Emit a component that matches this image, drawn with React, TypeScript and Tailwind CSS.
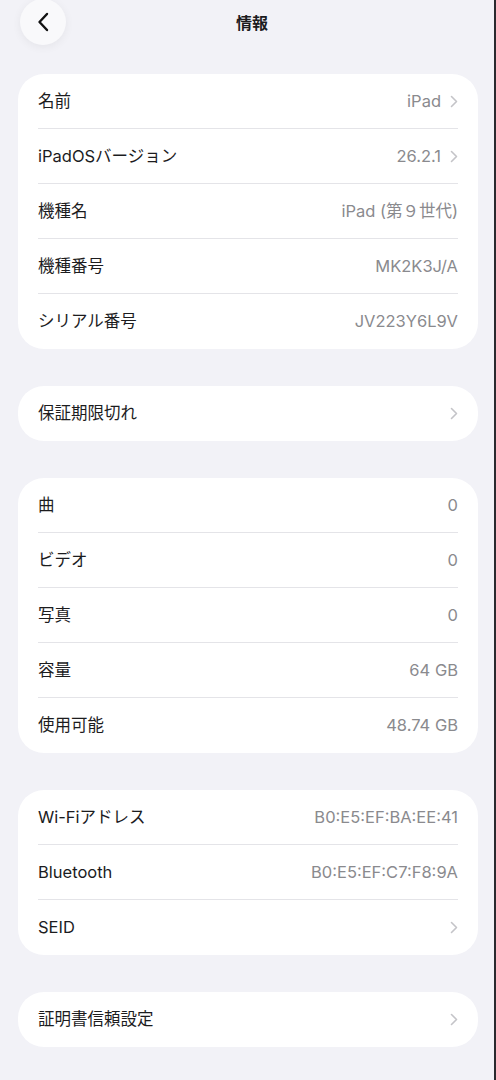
import React from "react";

interface Row {
  label: string;
  value?: string;
  chevron?: boolean;
}

const sections: Row[][] = [
  [
    { label: "名前", value: "iPad", chevron: true },
    { label: "iPadOSバージョン", value: "26.2.1", chevron: true },
    { label: "機種名", value: "iPad (第９世代)" },
    { label: "機種番号", value: "MK2K3J/A" },
    { label: "シリアル番号", value: "JV223Y6L9V" },
  ],
  [{ label: "保証期限切れ", chevron: true }],
  [
    { label: "曲", value: "0" },
    { label: "ビデオ", value: "0" },
    { label: "写真", value: "0" },
    { label: "容量", value: "64 GB" },
    { label: "使用可能", value: "48.74 GB" },
  ],
  [
    { label: "Wi-Fiアドレス", value: "B0:E5:EF:BA:EE:41" },
    { label: "Bluetooth", value: "B0:E5:EF:C7:F8:9A" },
    { label: "SEID", chevron: true },
  ],
  [{ label: "証明書信頼設定", chevron: true }],
];

const Chevron = () => (
  <svg width="8" height="13" viewBox="0 0 8 13" fill="none" className="ml-[9px] shrink-0">
    <path d="M1.5 1.5L6.5 6.5L1.5 11.5" stroke="#c4c4c8" strokeWidth="1.6" strokeLinecap="round" strokeLinejoin="round" />
  </svg>
);

const SettingsRow = ({ label, value, chevron, last }: Row & { last: boolean }) => (
  <div className="relative flex h-[55px] items-center px-5">
    <span className="text-[16.5px] text-[#1c1c1e]">{label}</span>
    <div className="ml-auto flex items-center">
      {value && <span className="text-[16.5px] text-[#8a8a8e]">{value}</span>}
      {chevron && <Chevron />}
    </div>
    {!last && <div className="absolute bottom-0 left-5 right-5 h-px bg-[#e4e4e8]" />}
  </div>
);

export default function App() {
  return (
    <div
      className="min-h-[1080px] w-[496px] bg-[#f2f2f7] pb-10 shadow-[inset_-2px_0_0_#2a2a2e]"
      style={{ fontFamily: 'Inter, "Noto Sans CJK JP", sans-serif' }}
    >
      <div className="relative flex h-[45px] items-center justify-center pl-[8px]">
        <div className="absolute left-5 top-[-1px] flex h-[46px] w-[46px] items-center justify-center rounded-full bg-[#f9f9fb] shadow-[0_2px_10px_rgba(0,0,0,0.06)]">
          <svg width="12" height="20" viewBox="0 0 12 20" fill="none">
            <path d="M10 2L2.5 10L10 18" stroke="#111" strokeWidth="2.4" strokeLinecap="round" strokeLinejoin="round" />
          </svg>
        </div>
        <span className="text-[16px] font-bold text-[#1c1c1e]">情報</span>
      </div>

      <div className="mt-[29px] flex flex-col gap-[37px] px-[18px]">
        {sections.map((rows, i) => (
          <div key={i} className="overflow-hidden rounded-[26px] bg-white">
            {rows.map((r, j) => (
              <SettingsRow key={r.label} {...r} last={j === rows.length - 1} />
            ))}
          </div>
        ))}
      </div>
    </div>
  );
}
